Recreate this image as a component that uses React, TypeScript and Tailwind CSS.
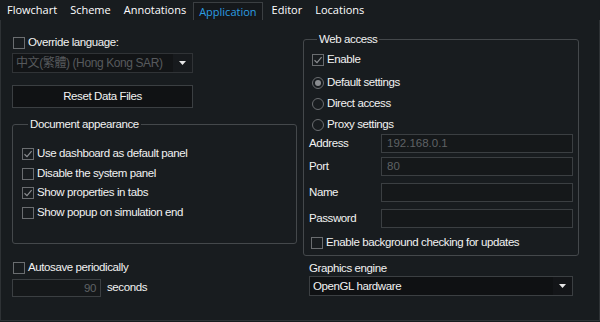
import React from "react";

const tabs = ["Flowchart", "Scheme", "Annotations", "Application", "Editor", "Locations"];

const appearance = [
  { label: "Use dashboard as default panel", checked: true },
  { label: "Disable the system panel", checked: false },
  { label: "Show properties in tabs", checked: true },
  { label: "Show popup on simulation end", checked: false },
];

const proxyFields = [
  { label: "Address", value: "192.168.0.1", gap: "mt-[2px]" },
  { label: "Port", value: "80", gap: "mt-[4px]" },
  { label: "Name", value: "", gap: "mt-[7px]" },
  { label: "Password", value: "", gap: "mt-[7px]" },
];

function Checkbox({ checked = false }: { checked?: boolean }) {
  return (
    <span className="w-[12px] h-[12px] border border-[#6a6d70] flex items-center justify-center shrink-0">
      {checked && (
        <svg width="10" height="10" viewBox="0 0 10 10">
          <path d="M1.5 5.2 L4 7.6 L8.6 2.2" fill="none" stroke="#8a8d90" strokeWidth="1.2" />
        </svg>
      )}
    </span>
  );
}

function Radio({ checked = false }: { checked?: boolean }) {
  return (
    <span className="w-[12px] h-[12px] rounded-full border border-[#6a6d70] flex items-center justify-center shrink-0">
      {checked && <span className="w-[6px] h-[6px] rounded-full bg-[#8a8d90]" />}
    </span>
  );
}

function Arrow() {
  return (
    <svg width="7" height="4" viewBox="0 0 7 4">
      <path d="M0 0 H7 L3.5 4 Z" fill="#e6e6e6" />
    </svg>
  );
}

export default function App() {
  return (
    <div
      className="w-[600px] h-[322px] bg-[#181c1f] text-[#f2f2f2] text-[11.5px] tracking-[-0.4px] overflow-hidden"
      style={{ fontFamily: '"Liberation Sans", Arial, sans-serif' }}
    >
      <div className="h-[20px] flex items-end pl-[1px] gap-[1px]" style={{ fontFamily: '"Open Sans", "Noto Sans", sans-serif' }}>
        {tabs.map((tab) =>
          tab === "Application" ? (
            <div
              key={tab}
              className="h-[18px] px-[5px] ml-[0px] mr-[2px] border border-b-0 border-[#3b3f42] text-[#2c9ee2] text-[11px] tracking-normal leading-[18px] bg-[#15181b]"
            >
              {tab}
            </div>
          ) : (
            <div key={tab} className="h-[18px] px-[6px] text-[11px] tracking-normal leading-[16px] text-white">
              {tab}
            </div>
          )
        )}
      </div>

      <div className="h-[301px] border-l border-r border-b border-[#2e3235] flex">
        <div className="w-[290px] pl-[11px] pt-[16px] flex flex-col">
          <label className="flex items-center gap-[3px] h-[14px] ml-[1px]">
            <Checkbox />
            <span>Override language:</span>
          </label>
          <div className="mt-[3px] w-[181px] h-[20px] border border-[#303336] flex">
            <div
              className="flex-1 bg-[#121416] text-[#575a5d] text-[12px] px-[3px] leading-[18px] whitespace-nowrap overflow-hidden"
              style={{ fontFamily: '"Liberation Sans", "Noto Sans CJK TC", sans-serif' }}
            >
              中文(繁體) (Hong Kong SAR)
            </div>
            <div className="w-[19px] flex items-center justify-center bg-[#171a1d]">
              <Arrow />
            </div>
          </div>
          <button className="mt-[12px] w-[181px] h-[23px] border border-[#3b3f42] bg-[#101214] text-[#f2f2f2]">
            Reset Data Files
          </button>

          <fieldset className="mt-[9px] w-[285px] h-[127px] border border-[#44484b] rounded-[3px] px-[9px]">
            <legend className="px-[2px] ml-[6px] leading-[14px]">Document appearance</legend>
            <div className="mt-[16px] flex flex-col gap-[5.5px]">
              {appearance.map((item) => (
                <label key={item.label} className="flex items-center gap-[3px] h-[14px]">
                  <Checkbox checked={item.checked} />
                  <span>{item.label}</span>
                </label>
              ))}
            </div>
          </fieldset>

          <label className="mt-[17px] flex items-center gap-[3px] h-[14px] ml-[1px]">
            <Checkbox />
            <span>Autosave periodically</span>
          </label>
          <div className="mt-[4px] flex items-center gap-[6px]">
            <div className="w-[89px] h-[18px] border border-[#3b3f42] bg-[#15181a] text-[#5f6265] text-right pr-[4px] leading-[16px]">
              90
            </div>
            <span>seconds</span>
          </div>
        </div>

        <div className="w-[285px] pl-[12px] pt-[12px] flex flex-col">
          <fieldset className="w-[276px] h-[224px] border border-[#44484b] rounded-[3px] pl-[7px] pr-[5px]">
            <legend className="px-[2px] ml-[6px] leading-[14px]">Web access</legend>
            <label className="mt-[7px] flex items-center gap-[3px] h-[14px] ml-[1px]">
              <Checkbox checked />
              <span>Enable</span>
            </label>
            <div className="mt-[9px] flex flex-col gap-[7px] ml-[1px]">
              <label className="flex items-center gap-[3px] h-[14px]">
                <Radio checked />
                <span>Default settings</span>
              </label>
              <label className="flex items-center gap-[3px] h-[14px]">
                <Radio />
                <span>Direct access</span>
              </label>
              <label className="flex items-center gap-[3px] h-[14px]">
                <Radio />
                <span>Proxy settings</span>
              </label>
            </div>
            <div className="flex flex-col -ml-[2px]">
              {proxyFields.map((f) => (
                <div key={f.label} className={`flex items-center h-[19px] ${f.gap}`}>
                  <span className="w-[72px]">{f.label}</span>
                  <div className="w-[192px] h-[19px] border border-[#3b3f42] bg-[#15181a] text-[#5f6265] px-[5px] leading-[17px] tracking-normal">
                    {f.value}
                  </div>
                </div>
              ))}
            </div>
            <label className="mt-[8px] flex items-center gap-[3px] h-[14px]">
              <Checkbox />
              <span>Enable background checking for updates</span>
            </label>
          </fieldset>

          <div className="mt-[5px] ml-[6px] h-[14px] leading-[14px]">Graphics engine</div>
          <div className="mt-[1px] ml-[6px] w-[264px] h-[20px] border border-[#3b3f42] flex">
            <div className="flex-1 bg-[#0f1113] px-[3px] leading-[18px]">OpenGL hardware</div>
            <div className="w-[19px] flex items-center justify-center bg-[#131518]">
              <Arrow />
            </div>
          </div>
        </div>
      </div>
    </div>
  );
}
